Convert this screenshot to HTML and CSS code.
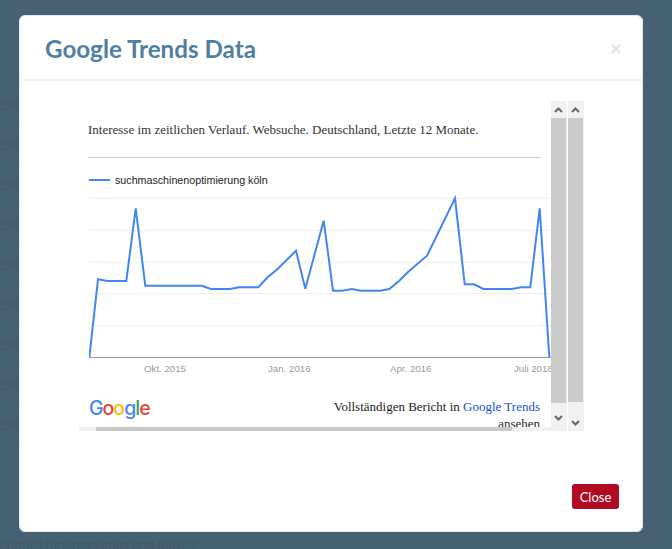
FILE: index.html
```html
<!DOCTYPE html>
<html lang="de">
<head>
<meta charset="utf-8">
<title>Google Trends Data</title>
<link rel="stylesheet" href="styles.css">
</head>
<body>
<ul class="page-list">
  <li>suchmaschinenoptimierung berlin</li>
  <li>suchmaschinenoptimierung hamburg</li>
  <li>suchmaschinenoptimierung münchen</li>
  <li>suchmaschinenoptimierung köln</li>
  <li>suchmaschinenoptimierung frankfurt</li>
  <li>suchmaschinenoptimierung stuttgart</li>
  <li>suchmaschinenoptimierung düsseldorf</li>
  <li>suchmaschinenoptimierung dortmund</li>
  <li>suchmaschinenoptimierung essen</li>
  <li class="page-last">suchmaschinenoptimierung leipzig</li>
</ul>
<div class="modal">
  <header class="modal-header">
    <h1 class="modal-title">Google Trends Data</h1>
    <span class="modal-x">×</span>
  </header>
  <div class="modal-body">
    <div class="frame">
      <div class="frame-main">
        <div class="viewport">
          <p class="chart-title">Interesse im zeitlichen Verlauf. Websuche. Deutschland, Letzte 12 Monate.</p>
          <div class="rule"></div>
          <div class="legend"><span class="legend-line"></span><span class="legend-text">suchmaschinenoptimierung köln</span></div>
          <svg class="chart" width="462" height="188" viewBox="0 0 462 188">
            <g class="grid">
              <line x1="0" x2="462" y1="8.5" y2="8.5"/>
              <line x1="0" x2="462" y1="40.5" y2="40.5"/>
              <line x1="0" x2="462" y1="72.5" y2="72.5"/>
              <line x1="0" x2="462" y1="103.5" y2="103.5"/>
              <line x1="0" x2="462" y1="135.5" y2="135.5"/>
            </g>
            <line class="axis" x1="0" x2="462" y1="167.5" y2="167.5"/>
            <polyline class="trend" points="0.3,167.3 9,89.3 18.3,91 37.3,91 46.7,18.3 56.3,95.7 112.7,95.7 122,99 141,99 150.3,97.3 169.3,97.3 178.7,87.3 188.3,79.3 207,60.7 216.3,98.7 234.7,30.7 244,100.7 253.3,100.7 262.7,99 272,100.7 291,100.7 300.3,99 310,91 319.3,81.7 338,65.7 366,8.3 375.7,94.3 385,94.3 394.3,99 422.7,99 432,97.3 441.3,97.3 450.7,18.3 460.3,167.3"/>
            <text class="tick" x="55" y="182">Okt. 2015</text>
            <text class="tick" x="179" y="182">Jan. 2016</text>
            <text class="tick" x="301" y="182">Apr. 2016</text>
            <text class="tick" x="425" y="182">Juli 2016</text>
          </svg>
          <div class="attribution">
            <span class="logo"><span class="blue">G</span><span class="red">o</span><span class="yellow">o</span><span class="blue">g</span><span class="green">l</span><span class="red">e</span></span>
            <p class="report">Vollständigen Bericht in <a class="report-link">Google Trends</a> ansehen</p>
          </div>
        </div>
        <div class="hbar"><span class="hthumb"></span></div>
      </div>
      <div class="vbar vbar-inner">
        <svg class="arrow" width="15" height="17" viewBox="0 0 15 17"><polyline points="4,11 7.5,7.5 11,11"/></svg>
        <span class="vthumb"></span>
        <svg class="arrow" width="15" height="28" viewBox="0 0 15 28"><polyline points="4,13 7.5,16.5 11,13"/></svg>
      </div>
      <div class="vbar vbar-outer">
        <svg class="arrow" width="15" height="17" viewBox="0 0 15 17"><polyline points="4,11 7.5,7.5 11,11"/></svg>
        <span class="vthumb"></span>
        <svg class="arrow" width="15" height="29" viewBox="0 0 15 29"><polyline points="4,19 7.5,22.5 11,19"/></svg>
      </div>
    </div>
  </div>
  <footer class="modal-footer">
    <button class="close-btn" type="button">Close</button>
  </footer>
</div>
</body>
</html>
```
FILE: styles.css
```css
* { box-sizing: border-box; }
html, body { margin: 0; height: 100%; }
body {
  background: #466173;
  overflow: hidden;
  position: relative;
  font-family: "Lato", sans-serif;
}
.page-list {
  list-style: none;
  margin: 0 0 0 -14px;
  padding: 86px 0 0;
}
.page-list li {
  height: 40px;
  line-height: 38px;
  font-size: 14px;
  color: #3f5a6c;
  border-bottom: 1px solid #445f71;
  white-space: nowrap;
}
.page-list .page-last {
  margin-top: 79px;
  border-bottom: 0;
}
.modal {
  position: absolute;
  left: 19px;
  top: 15px;
  width: 624px;
  height: 517px;
  background: #fff;
  border: 1px solid #e4ebf1;
  border-radius: 6px;
  display: flex;
  flex-direction: column;
}
.modal-header {
  height: 65px;
  flex: none;
  display: flex;
  align-items: center;
  justify-content: space-between;
  padding: 1px 20px 0 25px;
  border-bottom: 2px solid #eff2f5;
}
.modal-title {
  margin: 0;
  font-size: 24.2px;
  font-weight: 700;
  color: #4f7fa3;
}
.modal-x {
  margin-bottom: 2px;
  font-size: 21px;
  font-weight: 700;
  line-height: 1;
  color: #dde5ea;
}
.modal-body {
  flex: 1;
  padding: 20px 0 0 59px;
}
.frame {
  display: flex;
  width: 505px;
  height: 330px;
}
.frame-main {
  width: 472px;
  height: 330px;
  display: flex;
  flex-direction: column;
}
.viewport {
  height: 326px;
  overflow: hidden;
  padding: 20px 0 0 9px;
  background: #fff;
}
.chart-title {
  margin: 0;
  font: 13px/18px "Liberation Serif", serif;
  color: #333;
  white-space: nowrap;
}
.rule {
  width: 451px;
  height: 1px;
  margin: 18px 0 0 1px;
  background: #ccc;
}
.legend {
  display: flex;
  align-items: center;
  gap: 5px;
  height: 16px;
  margin: 14px 0 0 1px;
}
.legend-line {
  width: 21px;
  height: 2px;
  background: #4285f4;
}
.legend-text {
  font: 10.7px/16px "Liberation Sans", sans-serif;
  color: #222;
}
.chart {
  display: block;
  margin: 2px 0 0 1px;
}
.grid line { stroke: #eee; stroke-width: 1; }
.axis { stroke: #999; stroke-width: 1; }
.trend { fill: none; stroke: #4285f4; stroke-width: 2; stroke-linejoin: miter; }
.tick {
  font: 9.7px "Liberation Sans", sans-serif;
  fill: #999;
}
.attribution {
  display: flex;
  justify-content: space-between;
  align-items: flex-start;
  width: 451px;
  margin: 17px 0 0 1px;
}
.logo {
  font: 500 19.5px/26px "Inter", sans-serif;
  letter-spacing: -1px;
}
.blue { color: #4285f4; }
.red { color: #ea4335; }
.yellow { color: #fbbc05; }
.green { color: #34a853; }
.report {
  margin: 0;
  padding-top: 3px;
  width: 215px;
  text-align: right;
  font: 13px/17px "Liberation Serif", serif;
  color: #222;
}
.report-link { color: #1155cc; }
.hbar {
  height: 4px;
  background: #f1f1f1;
  padding-left: 17px;
}
.hthumb {
  display: block;
  width: 416px;
  height: 4px;
  background: #c8c8c8;
}
.vbar {
  width: 16px;
  height: 330px;
  flex: none;
  background: #f1f1f1;
  display: flex;
  flex-direction: column;
}
.vbar-outer { margin-left: 1px; }
.vthumb {
  display: block;
  flex: 1;
  width: 15px;
  background: #cbcbcb;
}
.arrow {
  display: block;
  flex: none;
}
.arrow polyline {
  fill: none;
  stroke: #666;
  stroke-width: 2;
}
.modal-footer {
  flex: none;
  display: flex;
  justify-content: flex-end;
  padding: 0 23px 22px 0;
}
.close-btn {
  width: 47px;
  height: 25px;
  padding: 0;
  border: 0;
  border-radius: 3px;
  background: #b10a22;
  color: #fff;
  font: 13px "Lato", sans-serif;
}
```
